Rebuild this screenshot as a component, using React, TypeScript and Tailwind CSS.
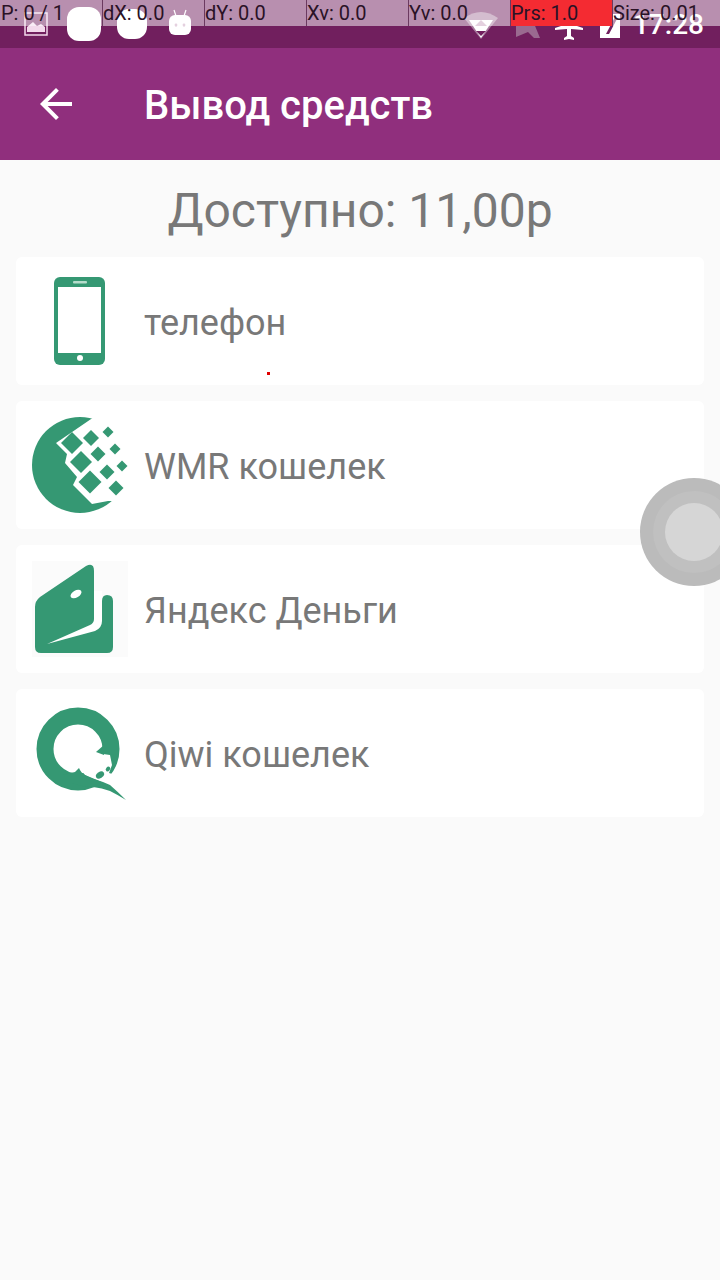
const debugCells = [
  { label: "P: 0 / 1", red: false },
  { label: "dX: 0.0", red: false },
  { label: "dY: 0.0", red: false },
  { label: "Xv: 0.0", red: false },
  { label: "Yv: 0.0", red: false },
  { label: "Prs: 1.0", red: true },
  { label: "Size: 0.01", red: false },
];

const GREEN = "#359873";

function PhoneIcon() {
  return (
    <svg viewBox="0 0 96 96" className="w-24 h-24">
      <rect x="22" y="4" width="51" height="88" rx="6" fill={GREEN} />
      <rect x="26" y="14" width="43" height="66" fill="#fff" />
      <rect x="41" y="8" width="14" height="2.5" rx="1" fill="#b5dccb" />
      <circle cx="48" cy="85" r="3" fill="#fff" />
    </svg>
  );
}

function WmrIcon() {
  const squares = [
    [40, 26, 11],
    [59, 21, 8],
    [76, 15, 5.5],
    [49, 45, 11],
    [66, 37, 7.5],
    [83, 32, 5.5],
    [58, 65, 11.5],
    [75, 55, 7.5],
    [90, 49, 5.5],
    [84, 71, 7.5],
  ];
  return (
    <svg viewBox="0 0 96 96" className="w-24 h-24">
      <circle cx="48" cy="48" r="48" fill={GREEN} />
      <path d="M62 0 L24 26 L35 37 L33 46 L45 60 L41 68 L60 87 L76 84 L96 84 L96 0 Z" fill="#fff" />
      {squares.map(([x, y, r], i) => (
        <path key={i} d={`M${x} ${y - r} L${x + r} ${y} L${x} ${y + r} L${x - r} ${y} Z`} fill={GREEN} />
      ))}
    </svg>
  );
}

function YandexIcon() {
  return (
    <svg viewBox="0 0 96 96" className="w-24 h-24">
      <rect width="96" height="96" fill="#fbfbfb" />
      <path
        d="M3 46 Q3 40 8 36 L54 5 Q62 1 62 10 L62 40 L70 40 Q70 34 75 34 Q81 34 81 40 L81 86 Q81 92 75 92 L9 92 Q3 92 3 86 Z"
        fill={GREEN}
      />
      <path d="M15 83 L58 64 Q62 62 62 58 L62 30 L70 30 L70 60 Q70 67 63 70 Z" fill="#fff" />
      <ellipse cx="44" cy="33" rx="6" ry="3.6" transform="rotate(-30 44 33)" fill="#fff" />
    </svg>
  );
}

function QiwiIcon() {
  return (
    <svg viewBox="0 0 96 96" className="w-24 h-24">
      <circle cx="46" cy="44" r="33" fill="none" stroke={GREEN} strokeWidth="17" />
      <path d="M50 44 L64 48 L78 50 L80 60 L77 68 L90 72 L80 82 L65 75 L53 70 L47 63 Z" fill="#fff" />
      <path d="M64 47 L72 40 L72 50 Z" fill={GREEN} />
      <path
        d="M47 63 Q49 68 53 70 Q60 74 65 75 Q72 77 78 80 Q86 87 94 95 Q86 90 78 86 Q70 83 61 82 Q50 82 40 78 L30 70 L43 67 Z"
        fill={GREEN}
      />
      <ellipse cx="68" cy="70" rx="4.5" ry="3" transform="rotate(-35 68 70)" fill={GREEN} />
      <ellipse cx="76" cy="64" rx="2.6" ry="2" transform="rotate(-50 76 64)" fill={GREEN} />
    </svg>
  );
}

const methods = [
  { name: "телефон", icon: <PhoneIcon /> },
  { name: "WMR кошелек", icon: <WmrIcon /> },
  { name: "Яндекс Деньги", icon: <YandexIcon /> },
  { name: "Qiwi кошелек", icon: <QiwiIcon /> },
];

export default function App() {
  return (
    <div className="relative w-[720px] h-[1280px] overflow-hidden bg-[#fafafa] font-['Roboto',sans-serif]">
      {/* Status bar */}
      <div className="h-12 bg-[#711f5e] flex items-center justify-between pl-6 pr-4 text-white">
        <div className="flex items-center">
          <svg viewBox="0 0 24 24" className="w-6 h-6">
            <rect x="1" y="1" width="22" height="22" fill="none" stroke="#f3d9ec" strokeWidth="1.5" />
            <path d="M3 20 L3 15 L9 10 L13 14 L17 12 L21 15 L21 20 Z" fill="#f3d9ec" />
          </svg>
          <div className="w-[34px] h-[34px] ml-[19px] rounded-xl bg-white" />
          <div className="w-[30px] h-[30px] ml-4 rounded-xl bg-white" />
          <svg viewBox="0 0 24 28" className="w-6 h-7 ml-[21px] -mt-[4px]">
            <path d="M6 2 L8 8 M18 2 L16 8" stroke="#fff" strokeWidth="1.2" />
            <rect x="1" y="7" width="22" height="20" rx="6" fill="#fff" />
            <circle cx="8" cy="17" r="1.4" fill="#c9a3bf" />
            <circle cx="16" cy="17" r="1.4" fill="#c9a3bf" />
          </svg>
        </div>
        <div className="flex items-center">
          <svg viewBox="0 0 34 30" className="w-[34px] h-[30px] mt-[2px]">
            <path d="M0 8 Q17 -4 34 8 L17 29 Z" fill="#a97a9f" />
            <path d="M4 10 L28 10 L16 28 Z" fill="#fff" transform="translate(1 0)" />
            <path d="M11 16 L23 16 L17 10 Z" fill="#c9a3bf" />
            <path d="M12 21 L22 21 L17 26 Z" fill="#711f5e" />
          </svg>
          <svg viewBox="0 0 24 24" className="w-6 h-6 ml-[18px] mt-[4px]">
            <path d="M0 2 L15 2 L24 24 L18 24 L12 18 L0 23 Z" fill="#9a6a90" />
          </svg>
          <svg viewBox="0 0 28 30" className="w-7 h-[30px] ml-[15px] mt-1">
            <path
              d="M14 1 Q16 1 16 6 L16 13 L28 17 L28 19 L16 18 L16 25 L19 27 L19 29 L14 28 L9 29 L9 27 L12 25 L12 18 L0 19 L0 17 L12 13 L12 6 Q12 1 14 1 Z"
              fill="#fff"
            />
          </svg>
          <svg viewBox="0 0 20 24" className="w-5 h-6 ml-[17px] mt-[4px]">
            <path d="M10 0 L20 0 L20 24 L0 24 L0 9 Z" fill="#fff" />
            <path d="M15 3 L6 20 L9 20 L17 5 Z" fill="#711f5e" />
          </svg>
          <span className="ml-[13px] mt-[2px] text-[28px] font-medium leading-none text-white">17:28</span>
        </div>
      </div>

      {/* Toolbar */}
      <header className="h-28 bg-[#902f7d] flex items-center text-white">
        <div className="w-36 pl-8 shrink-0">
          <svg viewBox="0 0 24 24" className="w-12 h-12" fill="#fff">
            <path d="M20 11H7.83l5.59-5.59L12 4l-8 8 8 8 1.41-1.41L7.83 13H20v-2z" />
          </svg>
        </div>
        <h1 className="pt-1 text-[40px] font-medium leading-none">Вывод средств</h1>
      </header>

      <main className="px-4">
        <h2 className="h-[97px] pt-1 flex items-center justify-center text-[48px] leading-none text-[#787878]">
          Доступно: 11,00р
        </h2>
        <div className="flex flex-col gap-4">
          {methods.map((m) => (
            <div key={m.name} className="h-32 bg-white rounded-md flex items-center pl-4">
              <div className="w-24 h-24 shrink-0">{m.icon}</div>
              <span className="ml-4 pt-1 text-[36px] leading-none text-[#787878]">{m.name}</span>
            </div>
          ))}
        </div>
      </main>

      {/* Touch trace dot */}
      <div className="absolute left-[267px] top-[372px] w-[3px] h-[3px] bg-[#e00000]" />

      {/* Pointer location overlay */}
      <div className="absolute left-0 top-0 w-full h-[26px] grid grid-cols-[repeat(6,102px)_1fr] bg-[#ffffff]/50 text-[20px] leading-[26px] text-[#2a1226]">
        {debugCells.map((c, i) => (
          <div
            key={c.label}
            className={`whitespace-nowrap overflow-visible ${i > 0 ? "border-l border-[#6b3a60]" : "pl-px"} ${c.red ? "bg-[#f42b32]" : ""}`}
          >
            {c.label}
          </div>
        ))}
      </div>

      {/* Floating touch button */}
      <div className="absolute left-[640px] top-[478px] w-[108px] h-[108px] rounded-full bg-[#bbbbbb] flex items-center justify-center">
        <div className="w-[82px] h-[82px] rounded-full bg-[#c0c0c0] flex items-center justify-center">
          <div className="w-[58px] h-[58px] rounded-full bg-[#d6d6d6]" />
        </div>
      </div>
    </div>
  );
}
